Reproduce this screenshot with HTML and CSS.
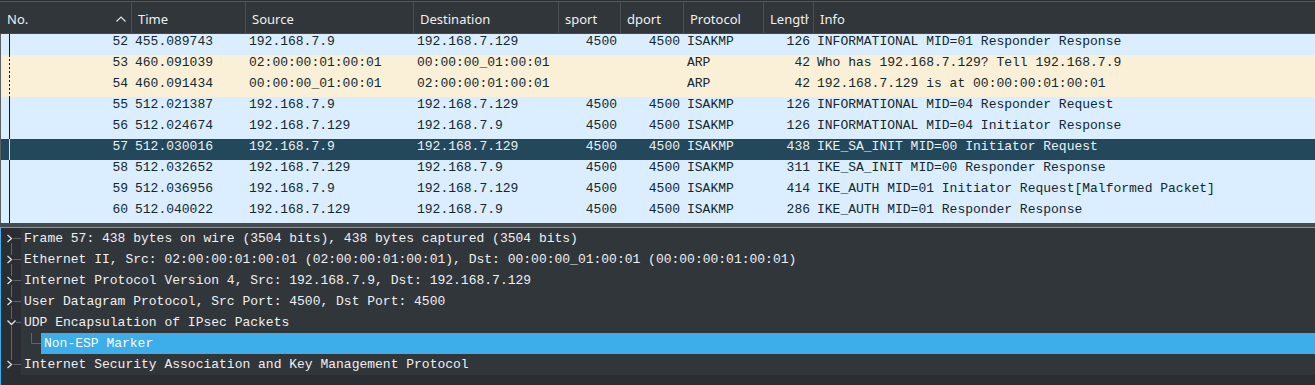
FILE: index.html
```html
<!DOCTYPE html>
<html lang="en">
<head>
    <meta charset="UTF-8">
    <title>Packet List</title>
    <link rel="stylesheet" href="styles.css">
</head>
<body>

<div class="packet-list">
    <div class="plist-head cols">
        <div class="hcell h-no">No.<svg class="sort" width="10" height="6" viewBox="0 0 10 6"><path d="M0.5 5.5L5 1l4.5 4.5"/></svg></div>
        <div class="hcell">Time</div>
        <div class="hcell">Source</div>
        <div class="hcell">Destination</div>
        <div class="hcell">sport</div>
        <div class="hcell">dport</div>
        <div class="hcell">Protocol</div>
        <div class="hcell">Length</div>
        <div class="hcell">Info</div>
    </div>

    <div class="prow cols udp">
        <span class="cell r rel">52</span><span class="cell">455.089743</span><span class="cell">192.168.7.9</span><span class="cell">192.168.7.129</span><span class="cell r">4500</span><span class="cell r">4500</span><span class="cell">ISAKMP</span><span class="cell r">126</span><span class="cell">INFORMATIONAL MID=01 Responder Response</span>
    </div>
    <div class="prow cols arp">
        <span class="cell r rel-dash">53</span><span class="cell">460.091039</span><span class="cell">02:00:00:01:00:01</span><span class="cell">00:00:00_01:00:01</span><span class="cell r"></span><span class="cell r"></span><span class="cell">ARP</span><span class="cell r">42</span><span class="cell">Who has 192.168.7.129? Tell 192.168.7.9</span>
    </div>
    <div class="prow cols arp">
        <span class="cell r rel-dash">54</span><span class="cell">460.091434</span><span class="cell">00:00:00_01:00:01</span><span class="cell">02:00:00:01:00:01</span><span class="cell r"></span><span class="cell r"></span><span class="cell">ARP</span><span class="cell r">42</span><span class="cell">192.168.7.129 is at 00:00:00:01:00:01</span>
    </div>
    <div class="prow cols udp">
        <span class="cell r rel">55</span><span class="cell">512.021387</span><span class="cell">192.168.7.9</span><span class="cell">192.168.7.129</span><span class="cell r">4500</span><span class="cell r">4500</span><span class="cell">ISAKMP</span><span class="cell r">126</span><span class="cell">INFORMATIONAL MID=04 Responder Request</span>
    </div>
    <div class="prow cols udp">
        <span class="cell r rel">56</span><span class="cell">512.024674</span><span class="cell">192.168.7.129</span><span class="cell">192.168.7.9</span><span class="cell r">4500</span><span class="cell r">4500</span><span class="cell">ISAKMP</span><span class="cell r">126</span><span class="cell">INFORMATIONAL MID=04 Initiator Response</span>
    </div>
    <div class="prow cols sel">
        <span class="cell r rel">57</span><span class="cell">512.030016</span><span class="cell">192.168.7.9</span><span class="cell">192.168.7.129</span><span class="cell r">4500</span><span class="cell r">4500</span><span class="cell">ISAKMP</span><span class="cell r">438</span><span class="cell">IKE_SA_INIT MID=00 Initiator Request</span>
    </div>
    <div class="prow cols udp">
        <span class="cell r rel">58</span><span class="cell">512.032652</span><span class="cell">192.168.7.129</span><span class="cell">192.168.7.9</span><span class="cell r">4500</span><span class="cell r">4500</span><span class="cell">ISAKMP</span><span class="cell r">311</span><span class="cell">IKE_SA_INIT MID=00 Responder Response</span>
    </div>
    <div class="prow cols udp">
        <span class="cell r rel">59</span><span class="cell">512.036956</span><span class="cell">192.168.7.9</span><span class="cell">192.168.7.129</span><span class="cell r">4500</span><span class="cell r">4500</span><span class="cell">ISAKMP</span><span class="cell r">414</span><span class="cell">IKE_AUTH MID=01 Initiator Request[Malformed Packet]</span>
    </div>
    <div class="prow cols udp">
        <span class="cell r rel">60</span><span class="cell">512.040022</span><span class="cell">192.168.7.129</span><span class="cell">192.168.7.9</span><span class="cell r">4500</span><span class="cell r">4500</span><span class="cell">ISAKMP</span><span class="cell r">286</span><span class="cell">IKE_AUTH MID=01 Responder Response</span>
    </div>
</div>

<div class="splitter"></div>

<!-- Packet details tree -->
<div class="details">
    <div class="drow">
        <svg class="branch" width="20" height="21" viewBox="0 0 20 21"><path class="ln" d="M10.5 15V21M12.5 10.5H20"/><path class="chev" d="M6.5 7l4 3.5-4 3.5"/></svg>
        <span class="dtext">Frame 57: 438 bytes on wire (3504 bits), 438 bytes captured (3504 bits)</span>
    </div>
    <div class="drow">
        <svg class="branch" width="20" height="21" viewBox="0 0 20 21"><path class="ln" d="M10.5 0V6M10.5 15V21M12.5 10.5H20"/><path class="chev" d="M6.5 7l4 3.5-4 3.5"/></svg>
        <span class="dtext">Ethernet II, Src: 02:00:00:01:00:01 (02:00:00:01:00:01), Dst: 00:00:00_01:00:01 (00:00:00:01:00:01)</span>
    </div>
    <div class="drow">
        <svg class="branch" width="20" height="21" viewBox="0 0 20 21"><path class="ln" d="M10.5 0V6M10.5 15V21M12.5 10.5H20"/><path class="chev" d="M6.5 7l4 3.5-4 3.5"/></svg>
        <span class="dtext">Internet Protocol Version 4, Src: 192.168.7.9, Dst: 192.168.7.129</span>
    </div>
    <div class="drow">
        <svg class="branch" width="20" height="21" viewBox="0 0 20 21"><path class="ln" d="M10.5 0V6M10.5 15V21M12.5 10.5H20"/><path class="chev" d="M6.5 7l4 3.5-4 3.5"/></svg>
        <span class="dtext">User Datagram Protocol, Src Port: 4500, Dst Port: 4500</span>
    </div>
    <div class="drow">
        <svg class="branch" width="20" height="21" viewBox="0 0 20 21"><path class="ln" d="M10.5 0V7M10.5 14V21M15 10.5H20"/><path class="chev" d="M6.5 8.5l4 4 4-4"/></svg>
        <span class="dtext">UDP Encapsulation of IPsec Packets</span>
    </div>
    <div class="drow">
        <svg class="branch" width="20" height="21" viewBox="0 0 20 21"><path class="ln" d="M10.5 0V21"/></svg>
        <svg class="indent" width="20" height="21" viewBox="0 0 20 21"><path class="ln" d="M10.5 0V10.5H20"/></svg>
        <span class="dtext selected">Non-ESP Marker</span>
    </div>
    <div class="drow">
        <svg class="branch" width="20" height="21" viewBox="0 0 20 21"><path class="ln" d="M10.5 0V6M12.5 10.5H20"/><path class="chev" d="M6.5 7l4 3.5-4 3.5"/></svg>
        <span class="dtext">Internet Security Association and Key Management Protocol</span>
    </div>
</div>

</body>
</html>
```

FILE: styles.css
```css
body {
    margin: 0;
    background-color: #2a2e32;
    font-family: "Liberation Mono", monospace;
    font-size: 13px;
    overflow: hidden;
}

/* shared column widths for header and rows */
.cols {
    display: grid;
    grid-template-columns: 131px 114px 168px 145px 62px 63px 80px 50px 1fr;
}

.plist-head {
    height: 31px;
    margin-top: 1px;
    border-top: 1px solid #54595e;
    border-bottom: 1px solid #43484d;
    background-color: #31363b;
    color: #eff0f1;
    font-family: "Noto Sans", sans-serif;
    font-size: 13px;
}
.hcell {
    display: flex;
    align-items: center;
    padding: 2px 4px 0 6px;
    border-left: 1px solid #4a4f54;
    white-space: nowrap;
    overflow: hidden;
    clip-path: inset(0 4px 0 0); /* labels get cut before the next column */
}
.h-no {
    justify-content: space-between;
    padding-left: 7px;
    padding-right: 5px;
    border-left: none;
    clip-path: none;
}
.sort {
    flex: none;
}
.sort path {
    fill: none;
    stroke: #dfe3e6;
    stroke-width: 1.2;
}

.prow {
    height: 21px;
    line-height: 16px;
    color: #12272e;
    background-color: #daeeff;
    box-shadow: inset 1px 0 #5b6065;
}
.prow.arp {
    background-color: #faf0d7;
}
.prow.sel {
    background-color: #23485c;
    color: #eff0f1;
}
.cell {
    padding: 0 3px 0 4px;
    white-space: pre;
    overflow: hidden;
}
.r {
    text-align: right;
}
/* related packet markers in the No. column */
.rel {
    background: linear-gradient(#1a1a1a, #1a1a1a) no-repeat 9px 0 / 1px 100%;
}
.rel-dash {
    background: repeating-linear-gradient(to bottom, #1a1a1a 0 2px, transparent 2px 4px) no-repeat 9px 0 / 1px 100%;
}
.sel .rel {
    background-image: linear-gradient(#dfe3e6, #dfe3e6);
}

.splitter {
    height: 4px;
    background-color: #474c51;
}

.details {
    height: 160px;
    border-top: 1px solid #3daee9;
    border-left: 1px solid #3daee9;
    background-color: #2a2e32;
    color: #eff0f1;
}
.drow {
    display: flex;
    height: 21px;
    line-height: 21px;
}
.branch {
    flex: none;
}
.indent {
    flex: none;
    background-color: #31363b;
}
.ln {
    fill: none;
    stroke: #5f6469;
    stroke-width: 1;
}
.chev {
    fill: none;
    stroke: #dfe3e6;
    stroke-width: 1.3;
}
.dtext {
    flex: 1;
    padding-left: 3px;
    background-color: #31363b;
    white-space: pre;
    overflow: hidden;
}
.dtext.selected {
    background-color: #3daee9;
    color: #fcfcfc;
}
```
